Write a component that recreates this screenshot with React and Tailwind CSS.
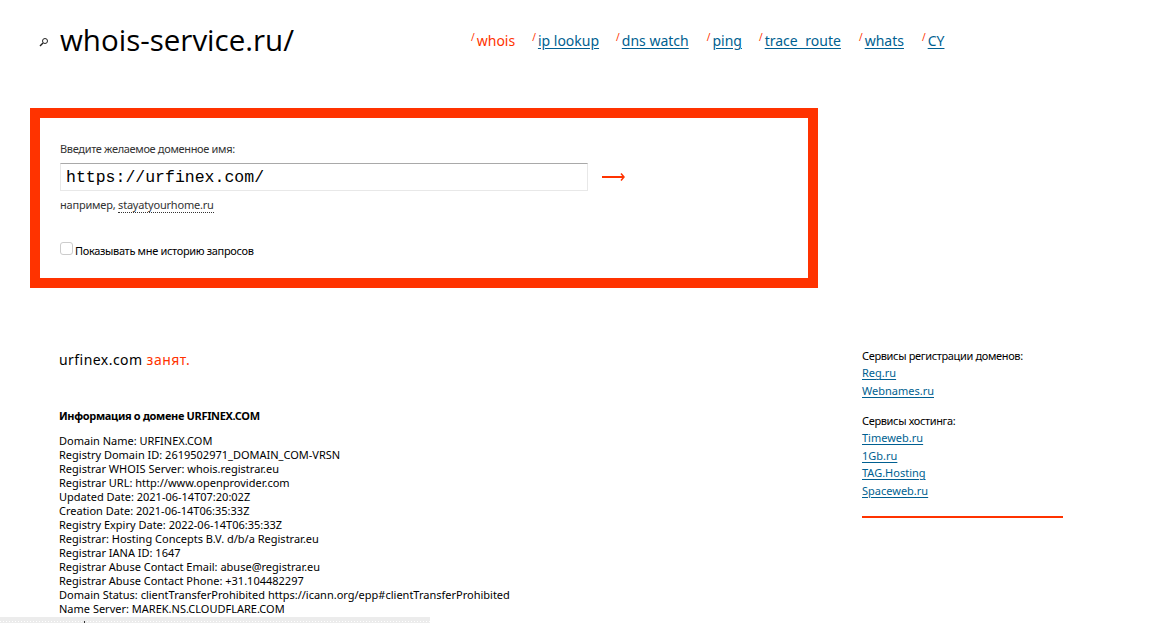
import React from 'react';

// extra classes nudge single nav items to the spacing in the original
const navItems = [
  { label: 'whois', extra: '' },
  { label: 'ip lookup', extra: '' },
  { label: 'dns watch', extra: 'mr-[1px]' },
  { label: 'ping', extra: '' },
  { label: 'trace route', extra: 'mr-[1px] [word-spacing:4px]' },
  { label: 'whats', extra: 'mr-[1px]' },
  { label: 'CY', extra: '' },
];

const whoisLines = [
  'Domain Name: URFINEX.COM',
  'Registry Domain ID: 2619502971_DOMAIN_COM-VRSN',
  'Registrar WHOIS Server: whois.registrar.eu',
  'Registrar URL: http://www.openprovider.com',
  'Updated Date: 2021-06-14T07:20:02Z',
  'Creation Date: 2021-06-14T06:35:33Z',
  'Registry Expiry Date: 2022-06-14T06:35:33Z',
  'Registrar: Hosting Concepts B.V. d/b/a Registrar.eu',
  'Registrar IANA ID: 1647',
  'Registrar Abuse Contact Email: abuse@registrar.eu',
  'Registrar Abuse Contact Phone: +31.104482297',
  'Domain Status: clientTransferProhibited https://icann.org/epp#clientTransferProhibited',
  'Name Server: MAREK.NS.CLOUDFLARE.COM',
];

function SideLinks({ title, links }) {
  return (
    <div className="mb-[13px]">
      <div className="h-[17px] leading-[17px] tracking-[-0.35px]">{title}</div>
      {links.map((link) => (
        <div key={link} className="h-[17.5px] leading-[17.5px]">
          <a href="#" className="text-[#005f91] underline underline-offset-2">{link}</a>
        </div>
      ))}
    </div>
  );
}

export default function App() {
  return (
    <div className="relative h-[623px] overflow-hidden bg-white font-['Noto_Sans',sans-serif] text-[11px] text-black">
      {/* header */}
      <div className="flex h-[108px] items-start">
        <div className="ml-[39px] mt-[23px] flex w-[432px] items-center">
          <svg width="10" height="10" viewBox="0 0 10 10" className="mr-[11px] mt-[4px]" fill="none" stroke="#222">
            <circle cx="6" cy="4" r="2.5" />
            <path d="M4 6 L1 9" strokeWidth="1.5" />
          </svg>
          <span className="text-[29.5px] leading-[34px] font-['Open_Sans',sans-serif]">whois-service.ru/</span>
        </div>
        <div className="mt-[31px] flex gap-[17px] text-[14px] leading-[20px]">
          {navItems.map((item, i) => (
            <div key={item.label} className={`flex ${item.extra}`}>
              <span className="mr-[2px] text-[10px] leading-[12px] text-[#ff3300]">/</span>
              {i === 0 ? (
                <span className="text-[#ff3300]">{item.label}</span>
              ) : (
                <a href="#" className="text-[#005f91] underline underline-offset-2">{item.label}</a>
              )}
            </div>
          ))}
        </div>
      </div>

      {/* search box */}
      <div className="ml-[30px] h-[180px] w-[788px] border-[10px] border-[#ff3300] pl-[20px] pt-[23px]">
        <div className="h-[16px] leading-[16px] tracking-[-0.33px] text-[#333]">Введите желаемое доменное имя:</div>
        <div className="mt-[6px] flex items-center">
          <div className="flex h-[28px] w-[528px] items-center border border-[#e8e8e8] border-t-[#a9a9a9] pl-[5px] pt-[2px] font-['Liberation_Mono',monospace] text-[16.5px]">
            https://urfinex.com/
          </div>
          <svg width="24" height="10" viewBox="0 0 24 10" className="ml-[13px]" fill="none" stroke="#ff3300">
            <path d="M1 5 H22" strokeWidth="2" />
            <path d="M20 1.5 L23 5 L20 8.5" strokeWidth="1.5" />
          </svg>
        </div>
        <div className="mt-[6px] h-[16px] leading-[16px] tracking-[-0.2px] text-[#333]">
          например, <span className="border-b border-dotted border-[#333]">stayatyourhome.ru</span>
        </div>
        <div className="mt-[29px] flex items-start">
          <span className="h-[13px] w-[13px] rounded-[3px] border border-[#ccc]" />
          <span className="ml-[2px] mt-[1px] leading-[16px] tracking-[-0.33px]">Показывать мне историю запросов</span>
        </div>
      </div>

      {/* results */}
      <div className="flex">
        <div className="ml-[59px] w-[803px]">
          <div className="mt-[62px] h-[20px] text-[14px] leading-[20px] tracking-[0.45px]">
            urfinex.com <span className="text-[#ff3300]">занят.</span>
          </div>
          <div className="mt-[38px] h-[16px] font-bold leading-[16px] tracking-[-0.33px]">Информация о домене URFINEX.COM</div>
          <div className="mt-[10px] leading-[14px]">
            {whoisLines.map((line) => (
              <div key={line} className="h-[14px] whitespace-nowrap">{line}</div>
            ))}
          </div>
        </div>
        <div className="mt-[59px] w-[201px]">
          <SideLinks title="Сервисы регистрации доменов:" links={['Reg.ru', 'Webnames.ru']} />
          <div className="mb-[17px]">
            <SideLinks title="Сервисы хостинга:" links={['Timeweb.ru', '1Gb.ru', 'TAG.Hosting', 'Spaceweb.ru']} />
          </div>
          <div className="h-[2px] bg-[#ff3300]" />
        </div>
      </div>

      {/* status bar */}
      <div className="absolute bottom-0 left-0 h-[6px] w-[430px] bg-[#ececec] pt-[4px]">
        <div className="h-[1px] bg-[repeating-linear-gradient(90deg,#ffffff_0_1px,transparent_1px_3px)]" />
        <div className="absolute left-[84px] top-[4px] h-[2px] w-[1px] bg-[#333]" />
      </div>
    </div>
  );
}
